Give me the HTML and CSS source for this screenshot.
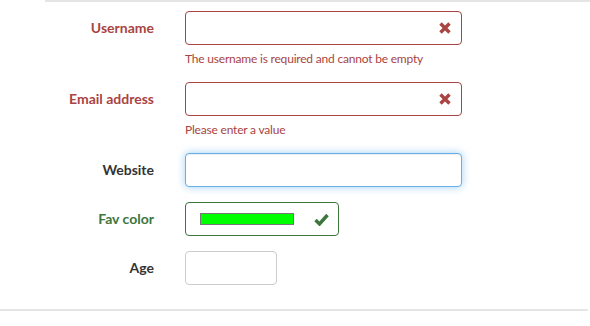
FILE: index.html
```html
<!DOCTYPE html>
<html>
<head>
<meta charset="utf-8">
<link rel="stylesheet" href="styles.css">
</head>
<body>
<div class="page">
  <div class="top-rule"></div>
  <form class="form">
    <div class="row has-error">
      <label class="label">Username</label>
      <div class="field">
        <div class="control wide">
          <input class="input" type="text">
          <svg class="fb" width="12" height="12" viewBox="0 0 12 12"><path d="M1.5 1.5 L10.5 10.5 M10.5 1.5 L1.5 10.5" stroke="#a94442" stroke-width="3.4"/></svg>
        </div>
        <div class="help">The username is required and cannot be empty</div>
      </div>
    </div>
    <div class="row has-error">
      <label class="label">Email address</label>
      <div class="field">
        <div class="control wide">
          <input class="input" type="text">
          <svg class="fb" width="12" height="12" viewBox="0 0 12 12"><path d="M1.5 1.5 L10.5 10.5 M10.5 1.5 L1.5 10.5" stroke="#a94442" stroke-width="3.4"/></svg>
        </div>
        <div class="help">Please enter a value</div>
      </div>
    </div>
    <div class="row">
      <label class="label">Website</label>
      <div class="field">
        <div class="control wide">
          <input class="input focus" type="text">
        </div>
      </div>
    </div>
    <div class="row has-success">
      <label class="label">Fav color</label>
      <div class="field">
        <div class="control color-box">
          <span class="swatch"></span>
          <svg class="fb ok" width="15" height="13" viewBox="0 0 15 13"><path d="M1.5 7 L5.5 11 L13.5 2" fill="none" stroke="#3c763d" stroke-width="3.4"/></svg>
        </div>
      </div>
    </div>
    <div class="row">
      <label class="label">Age</label>
      <div class="field">
        <div class="control age">
          <input class="input" type="text">
        </div>
      </div>
    </div>
  </form>
  <div class="bottom-rule"></div>
</div>
</body>
</html>
```
FILE: styles.css
```css
* { box-sizing: border-box; }
body {
  margin: 0;
  background: #fff;
  font-family: Lato, "Liberation Sans", sans-serif;
  color: #333;
}
.page { width: 590px; }
.top-rule {
  height: 2px;
  background: #e5e5e5;
  margin-left: 45px;
}
.form {
  display: flex;
  flex-direction: column;
  gap: 15px;
  padding-top: 9px;
}
.row {
  display: flex;
  align-items: flex-start;
  gap: 31px;
}
.label {
  width: 154px;
  text-align: right;
  font-weight: bold;
  font-size: 14px;
  line-height: 34px;
  height: 34px;
}
.field { display: flex; flex-direction: column; }
.control {
  position: relative;
  height: 34px;
}
.wide { width: 277px; }
.age { width: 92px; }
.input {
  display: block;
  width: 100%;
  height: 34px;
  border: 1px solid #ccc;
  border-radius: 4px;
  background: #fff;
  outline: none;
  font: inherit;
  padding: 6px 12px;
}
.input.focus {
  border-color: #66afe9;
  box-shadow: inset 0 1px 1px rgba(0,0,0,.075), 0 0 8px rgba(102,175,233,.6);
}
.fb {
  position: absolute;
  top: 11px;
  right: 11px;
}
.has-error .label, .has-error .help { color: #a94442; }
.has-error .input { border-color: #a94442; }
.has-success .label { color: #3c763d; }
.color-box {
  width: 154px;
  border: 1px solid #3c763d;
  border-radius: 4px;
  display: flex;
  align-items: center;
  padding-left: 14px;
}
.color-box .fb.ok { top: 10px; right: 9px; }
.swatch {
  display: block;
  width: 94px;
  height: 12px;
  background: #00ff00;
  border: 1px solid #777;
}
.help {
  font-size: 12px;
  letter-spacing: -0.2px;
  line-height: 18px;
  margin-top: 4px;
  padding-top: 1px;
  height: 22px;
  margin-bottom: -4px;
}
.bottom-rule {
  height: 2px;
  background: #e5e5e5;
  margin-top: 24px;
  width: 588px;
}
```
